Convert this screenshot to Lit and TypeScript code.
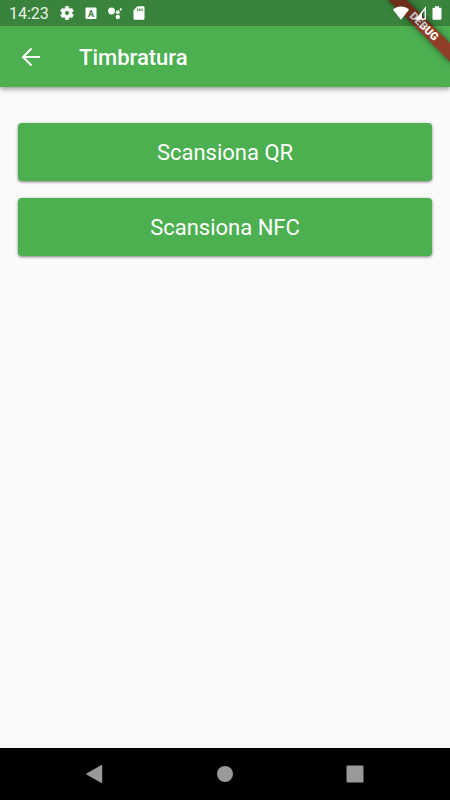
import { LitElement, html, css } from "lit";
import { customElement } from "lit/decorators.js";

@customElement("status-bar")
class StatusBar extends LitElement {
  static styles = css`
    :host {
      position: relative;
      z-index: 2;
      display: flex;
      justify-content: space-between;
      align-items: center;
      height: 26px;
      padding: 0 8px 0 9px;
      background: rgba(0, 0, 0, 0.25);
      color: #fff;
      font-size: 16px;
    }
    .group {
      display: flex;
      align-items: center;
    }
    .notices {
      gap: 8px;
    }
    .time {
      margin-right: 2px;
      padding-top: 2px;
      line-height: 24px;
      color: #e8f2e8;
    }
    .signals {
      gap: 6px;
    }
    svg {
      display: block;
      fill: #fff;
    }
    .letter {
      fill: #3a833d;
      font: 700 9px Roboto, sans-serif;
      text-anchor: middle;
    }
  `;
  render() {
    return html`
      <div class="group notices">
        <span class="time">14:23</span>
        <svg width="16" height="16" viewBox="0 0 24 24" aria-hidden="true">
          <path
            d="M19.4 13a7.500 7.500 0 0 0 0-2l2.100-1.650a.5.5 0 0 0 .12-.64l-2-3.460a.5.5 0 0 0-.61-.22l-2.490 1a7.300 7.300 0 0 0-1.690-.98l-.38-2.650A.49.49 0 0 0 14 2h-4a.49.49 0 0 0-.49.42l-.38 2.650c-.61.25-1.170.59-1.690.98l-2.490-1a.49.49 0 0 0-.61.22l-2 3.460a.49.49 0 0 0 .12.64L4.570 11a7.900 7.900 0 0 0 0 2l-2.110 1.650a.5.5 0 0 0-.12.64l2 3.460c.12.22.39.3.61.22l2.490-1c.52.4 1.080.73 1.690.98l.38 2.650c.03.24.24.42.49.42h4c.25 0 .46-.18.49-.42l.38-2.650c.61-.25 1.170-.59 1.690-.98l2.490 1c.23.09.49 0 .61-.22l2-3.460a.5.5 0 0 0-.12-.64zM12 15.300a3.300 3.300 0 1 1 0-6.600 3.300 3.300 0 0 1 0 6.600z"
            stroke="#fff"
            stroke-width=".6"
          />
        </svg>
        <svg width="16" height="16" viewBox="0 0 16 16" aria-hidden="true">
          <rect x="2.500" y="2.500" width="11" height="11.500" rx="1" />
          <text class="letter" x="8" y="12">A</text>
        </svg>
        <svg width="16" height="16" viewBox="0 0 16 16" aria-hidden="true">
          <circle cx="4.500" cy="6" r="3.400" />
          <circle cx="10.800" cy="7.200" r="1.900" />
          <circle cx="13.800" cy="4.400" r="1.100" />
          <circle cx="10.800" cy="12" r="2.200" />
        </svg>
        <svg width="16" height="16" viewBox="0 0 16 16" aria-hidden="true">
          <path
            fill-rule="evenodd"
            d="M6.500 1.200H12.300a1.200 1.200 0 0 1 1.200 1.200v11.200a1.200 1.200 0 0 1-1.200 1.200H3.700a1.200 1.200 0 0 1-1.200-1.200V5.200zM6 3.500v2.500h1.200V3.500zM8.200 3.500v2.500h1.200V3.500zM10.400 3.500v2.500h1.200V3.500z"
          />
        </svg>
      </div>
      <div class="group signals">
        <svg width="16" height="16" viewBox="0 0 16 16" aria-hidden="true">
          <path d="M8 14.800 0 4.800C4.600.4 11.400.4 16 4.800z" />
        </svg>
        <svg width="11" height="16" viewBox="0 0 11 16" aria-hidden="true">
          <path fill-rule="evenodd" d="M0 14.800 11 1.200v13.600zM7 8.600v5h2.600V5.200z" />
        </svg>
        <svg width="10" height="16" viewBox="0 0 10 16" aria-hidden="true">
          <path d="M3 1.200h4v1.500h1.500a1 1 0 0 1 1 1v10a1 1 0 0 1-1 1h-7a1 1 0 0 1-1-1v-10a1 1 0 0 1 1-1H3z" />
        </svg>
      </div>
    `;
  }
}

@customElement("debug-banner")
class DebugBanner extends LitElement {
  static styles = css`
    :host {
      position: absolute;
      top: 0;
      right: 0;
      width: 88px;
      height: 88px;
      overflow: hidden;
      pointer-events: none;
      z-index: 1;
    }
    .ribbon {
      position: absolute;
      top: 20px;
      right: -18px;
      width: 88px;
      height: 13px;
      line-height: 14px;
      text-align: center;
      font-size: 11px;
      font-weight: 900;
      color: #fff;
      background: rgba(160, 36, 28, 0.82);
      box-shadow: 0 0 6px rgba(0, 0, 0, 0.5);
      transform: rotate(45deg);
    }
  `;
  render() {
    return html`<div class="ribbon">DEBUG</div>`;
  }
}

@customElement("app-root")
class AppRoot extends LitElement {
  static styles = css`
    :host {
      position: relative;
      display: flex;
      flex-direction: column;
      min-height: 100vh;
      background: #fafafa;
      font-family: Roboto, sans-serif;
    }
    button {
      border: 0;
      padding: 0;
      font: inherit;
      color: inherit;
      background: none;
      cursor: pointer;
    }
    svg {
      display: block;
    }
    .top {
      background: #4caf50;
      box-shadow: 0 2px 5px rgba(0, 0, 0, 0.4);
    }
    .appbar {
      display: flex;
      align-items: center;
      height: 61px;
      padding: 0 19px;
      gap: 36px;
      color: #fff;
    }
    h1 {
      margin: 0;
      font-size: 22px;
      line-height: 30px;
      padding-top: 2px;
      font-weight: 500;
    }
    main {
      flex: 1;
      display: flex;
      flex-direction: column;
      gap: 17px;
      padding: 36px 18px;
    }
    .action {
      height: 58px;
      padding-top: 2px;
      border-radius: 4px;
      color: #fff;
      background: #4caf50;
      font-size: 22px;
      line-height: 30px;
      box-shadow: 0 1px 3px rgba(0, 0, 0, 0.5);
    }
    .navbar {
      display: grid;
      grid-template-columns: repeat(3, 1fr);
      height: 52px;
      padding: 0 30px;
      background: #000;
    }
    .navbar button {
      display: grid;
      place-items: center;
    }
    .navbar svg {
      fill: #999;
    }
  `;
  render() {
    return html`
      <div class="top">
        <status-bar></status-bar>
        <header class="appbar">
          <button aria-label="Indietro">
            <svg width="24" height="24" viewBox="0 0 24 24" fill="none" stroke="#fff" stroke-width="2">
              <path d="M21 12H4.500M12.500 3.500 4 12l8.500 8.500" />
            </svg>
          </button>
          <h1>Timbratura</h1>
        </header>
      </div>
      <debug-banner></debug-banner>
      <main>
        <button class="action">Scansiona QR</button>
        <button class="action">Scansiona NFC</button>
      </main>
      <nav class="navbar">
        <button aria-label="Back">
          <svg width="20" height="20" viewBox="0 0 20 20">
            <path d="M16 1.200a.8.8 0 0 1 1.200.7v16.200a.8.8 0 0 1-1.200.7L1.500 10.600a.7.7 0 0 1 0-1.200z" />
          </svg>
        </button>
        <button aria-label="Home">
          <svg width="18" height="18" viewBox="0 0 18 18"><circle cx="9" cy="9" r="8" /></svg>
        </button>
        <button aria-label="Recents">
          <svg width="18" height="18" viewBox="0 0 18 18"><rect x=".5" y=".5" width="17" height="17" rx="1" /></svg>
        </button>
      </nav>
    `;
  }
}
